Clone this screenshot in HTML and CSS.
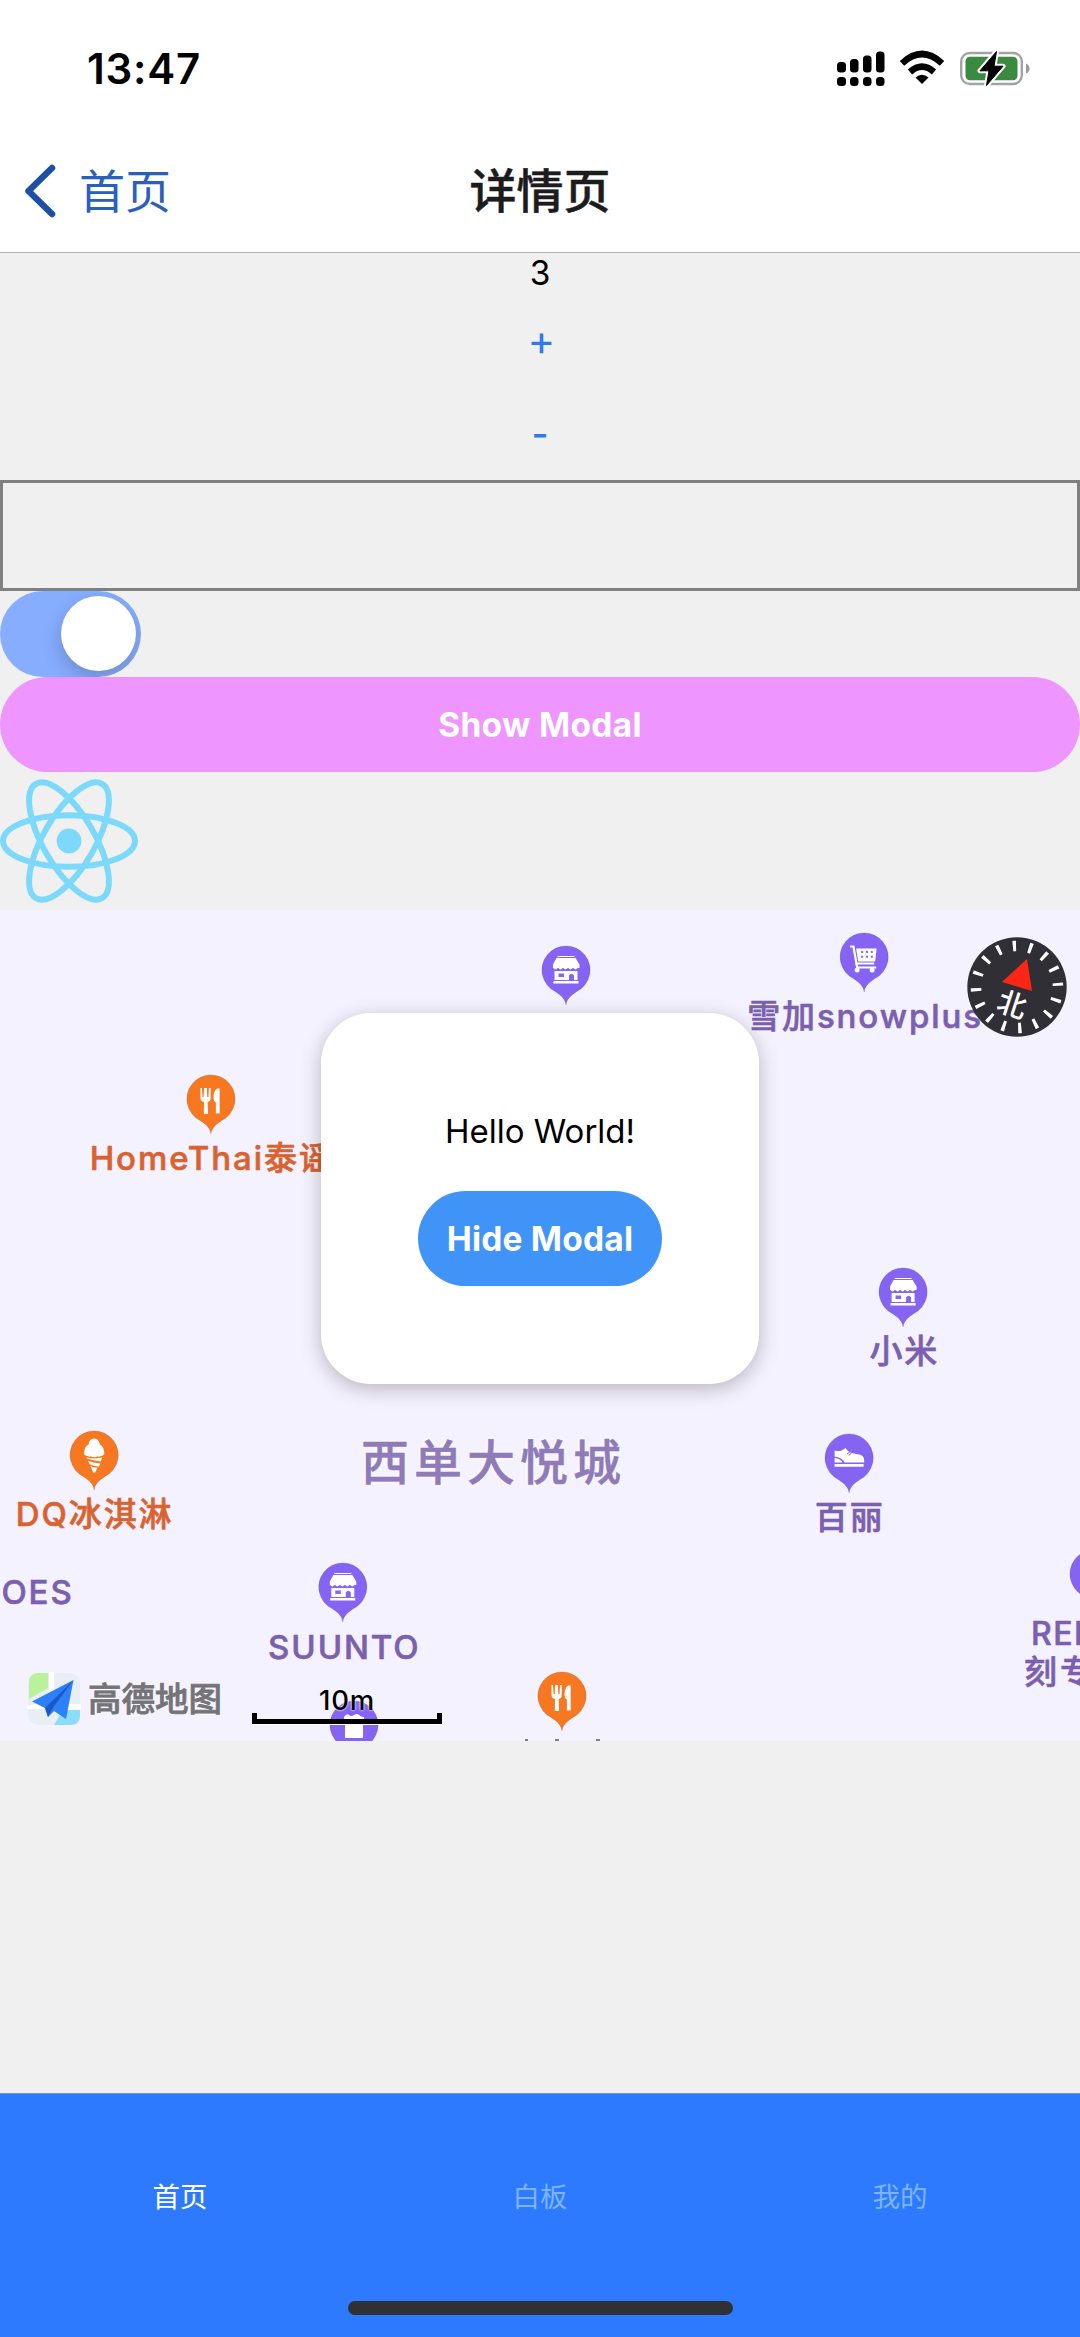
FILE: index.html
```html
<!DOCTYPE html>
<html lang="zh-CN">
<head>
<meta charset="utf-8">
<title>详情页</title>
<link rel="stylesheet" href="styles.css">
</head>
<body>
<svg class="defs" aria-hidden="true">
  <symbol id="pin" viewBox="0 0 50 60">
    <path d="M25 60C24.300 54.500 21.500 51.500 14.500 46.700A24.100 24.100 0 1 1 35.500 46.700C28.500 51.500 25.700 54.500 25 60Z" stroke="#000" stroke-opacity=".12" stroke-width="1"/>
  </symbol>
  <symbol id="shop" viewBox="0 0 50 60">
    <path fill="#fff" d="M16.500 11h17v1h-17zM15.500 13h19l4 6.500v3.500h-1.500c-1 0-1.500 1.500-2.500 1.500s-1.500-1.500-2.500-1.500-1.500 1.500-2.500 1.500-1.500-1.500-2.500-1.500-1.500 1.500-2.500 1.500-1.500-1.500-2.500-1.500-1.500 1.500-2.500 1.500-1.500-1.500-2.500-1.500-1.500 1.500-2.500 1.500-1.500-1.500-2.500-1.500v-3.500zM13.500 26h23v9h-3.500v-4.500q-2.500-3.500-5 0v4.500h-14.500zM17.500 28.500v3.500h5.500v-3.500zM12.500 36h25v2.500h-25z" fill-rule="evenodd"/>
  </symbol>
  <symbol id="food" viewBox="0 0 50 60">
    <path fill="#fff" d="M14.500 14h1.500l.5 9h1.200l.4-9h2.800l.4 9h1.200l.5-9h1.700v9.500q0 4-3 4.500l.3 12h-4.200l.3-12q-3.600-.5-3.600-4.500zM33.700 14.500v25h-3.800v-11q-2.400-1-2.400-4.500c0-4 .8-7.500 3.500-9.500z"/>
  </symbol>
  <symbol id="cart" viewBox="0 0 50 60">
    <path fill="none" stroke="#fff" stroke-width="2.200" d="M11 14.500h3.300l3.700 21h19M16 31.500h19"/>
    <path fill="#fff" d="M17 16.500h20.500l-1.500 13h-17z"/>
    <g stroke="#8564f4" stroke-width="2" stroke-dasharray="2 2.800"><path d="M22 20h13M22 24.800h13"/></g>
    <circle cx="18" cy="38" r="2.500" fill="#fff"/><circle cx="33" cy="38" r="2.500" fill="#fff"/>
  </symbol>
  <symbol id="shoe" viewBox="0 0 50 60">
    <path fill="#fff" d="M10.500 17.500q4 1 7 0l4-2.500c1.500 2 2.500 3.500 5 4.500 5 2 11 1 13 5q.7 1.500.5 5H20.500q-2.500-5-10-6zM10.500 25q6 .5 8 4.500h-8zM10.500 31h29v2.700h-29z"/>
    <path d="m23 21 3-2.500M24.500 22.500l3-2.500" stroke="#8564f4"/>
  </symbol>
  <symbol id="ice" viewBox="0 0 50 60">
    <path fill="#fff" d="M25 8.500c3.500 0 5.500 3 5.500 6q4 2 4 5.500 2.500 5.500-3 6-1.500 1.500-3 .2-3.500 2-7 0-1.500 1.300-3-.2-5.500-.5-3-6 0-3.500 4-5.500c0-3 2-6 5.500-6zM17 27.500q7 2 16 0l-1.400 4q-7-1-13.300-2.800zM18.700 30.800q5 2 12.400 2.700l-1.300 3.300q-5-.6-9.200-2.500zM21.300 36q3 1.500 7 1.800l-2.300 4.700h-2z"/>
  </symbol>
</svg>

<div class="screen">
  <header class="header">
    <div class="status">
      <time class="clock">13:47</time>
      <svg class="status-icons" width="194" height="38" viewBox="0 0 194 38">
        <g>
          <rect x="1" y="12" width="9" height="10.500" rx="3.500"/><rect x="14" y="9" width="8.500" height="13.500" rx="3.500"/><rect x="27" y="5.500" width="8.500" height="17" rx="3.500"/><rect x="40" y="1.500" width="8.500" height="21" rx="3.500"/>
          <rect x="1" y="27" width="9" height="9" rx="3.500"/><rect x="14" y="27" width="8.500" height="9" rx="3.500"/><rect x="27" y="27" width="8.500" height="9" rx="3.500"/><rect x="40" y="27" width="8.500" height="9" rx="3.500"/>
        </g>
        <g fill="none" stroke="#000" stroke-width="6.500">
          <path d="M66 13.300Q86 -5.300 106 13.300"/><path d="M74 22Q86 11.200 98 22"/>
        </g>
        <path d="M79.500 27.500q6.500-5.500 13 0l-6.500 6.500z"/>
        <rect x="125.200" y="3" width="60.600" height="31" rx="8.500" fill="none" stroke="#a3a3a5" stroke-width="2.400"/>
        <rect x="129.500" y="6.800" width="52" height="23.500" rx="4.500" fill="#3a8b40"/>
        <path d="M190 13.500q3.500 1.500 3.500 5t-3.500 5z" fill="#9a9a9c"/>
        <path d="M160.500 1.500 144 20.800h9L150.500 35.500 167 16.200h-9z" stroke="#fff" stroke-width="5" stroke-linejoin="round"/>
        <path d="M160.500 1.500 144 20.800h9L150.500 35.500 167 16.200h-9z" stroke="#000" stroke-linejoin="round"/>
      </svg>
    </div>
    <nav class="navbar">
      <a class="back">
        <svg width="32" height="54" viewBox="0 0 32 54"><path d="M28 4 4.500 27l23.500 23" fill="none" stroke="#1d4fa5" stroke-width="6.500" stroke-linecap="round" stroke-linejoin="round"/></svg>
        <span>首页</span>
      </a>
      <h1 class="title">详情页</h1>
    </nav>
  </header>

  <main class="content">
    <div class="count">3</div>
    <button class="step plus">+</button>
    <button class="step">-</button>
    <input class="field" type="text">
    <div class="switch"><span class="knob"></span></div>
    <button class="show-modal">Show Modal</button>
    <svg class="logo" width="138" height="138" viewBox="-69 -69 138 138">
      <circle r="12.400" fill="#7dd9fa"/>
      <g fill="none" stroke="#7dd9fa" stroke-width="6"><ellipse rx="66" ry="25.800"/><ellipse rx="66" ry="25.800" transform="rotate(60)"/><ellipse rx="66" ry="25.800" transform="rotate(120)"/></g>
    </svg>

    <section class="map">
      <div class="poi shop1"><svg class="pin"><use href="#pin"/><use href="#shop"/></svg></div>
      <div class="poi snow"><svg class="pin"><use href="#pin"/><use href="#cart"/></svg><span class="label">雪加snowplus</span></div>
      <div class="poi thai food"><svg class="pin"><use href="#pin"/><use href="#food"/></svg><span class="label">HomeThai泰谣</span></div>
      <div class="poi mi"><svg class="pin"><use href="#pin"/><use href="#shop"/></svg><span class="label">小米</span></div>
      <div class="poi belle"><svg class="pin"><use href="#pin"/><use href="#shoe"/></svg><span class="label">百丽</span></div>
      <div class="poi dq food"><svg class="pin"><use href="#pin"/><use href="#ice"/></svg><span class="label">DQ冰淇淋</span></div>
      <div class="poi suunto"><svg class="pin"><use href="#pin"/><use href="#shop"/></svg><span class="label">SUUNTO</span></div>
      <div class="poi rei"><svg class="pin"><use href="#pin"/></svg><span class="label latin">REI</span><span class="label">刻专</span></div>
      <div class="poi oes"><span class="label">OES</span></div>
      <div class="poi shop2"><svg class="pin"><use href="#pin"/><path fill="#fff" d="M15 17q3-4 5-2t5 0 5 0 5 2v3H15zM16 24h18v14H16z"/></svg></div>
      <div class="poi diner food"><svg class="pin"><use href="#pin"/><use href="#food"/></svg></div>
      <svg class="sliver" width="80" height="2" viewBox="0 0 80 2"><path d="M1 1h3M31 1h4M72 1h4" stroke="#8c7b78" stroke-width="2"/></svg>
      <div class="mall">西单大悦城</div>

      <svg class="compass" width="100" height="100" viewBox="-50 -50 100 100">
        <circle r="49.700" fill="#302f36"/>
        <circle r="41" fill="none" stroke="#fff" stroke-width="10.500" stroke-dasharray="3.300 12.801" stroke-dashoffset="1.650" transform="rotate(-4)"/>
        <path d="M10-28-15-5 15 4z" fill="#fb2716"/>
        <text transform="translate(-5 18) rotate(18)" x="0" y="10" text-anchor="middle">北</text>
      </svg>

      <div class="amap">
        <svg width="54" height="54" viewBox="0 0 54 54">
          <rect x="1" y="1" width="52" height="52" rx="10" fill="#e9eef5"/>
          <path d="M11 1h10v15L2 27V11Q2 1 11 1z" fill="#baf29b"/><path d="M53 38v6q0 9-10 9H27l9-15z" fill="#8cdcfb"/>
          <path d="M22 0h5v19h-5zM0 34l22-5v8H0zM37 32h17v6H37z" fill="#fff"/>
          <path d="M46.500 8 5 29.500 18 36l3 9 6-6 12 8z" fill="#2c80f8"/><path d="M46.500 8 18 36l3 9 5.500-10z" fill="#1c58c8"/>
        </svg>
        <span>高德地图</span>
      </div>
      <div class="scale"><span>10m</span><i></i></div>
    </section>
  </main>

  <nav class="tabs">
    <a class="tab active">首页</a><a class="tab">白板</a><a class="tab">我的</a>
    <span class="home-indicator"></span>
  </nav>

  <div class="modal">
    <p>Hello World!</p>
    <button>Hide Modal</button>
  </div>
</div>
</body>
</html>
```
FILE: styles.css
```css
* { box-sizing: border-box; }
body { margin: 0; font-family: Inter, "Noto Sans CJK SC", sans-serif; background: #f0f0f0; }
button, input { font: inherit; border: 0; padding: 0; margin: 0; background: none; }
.defs { display: none; }
.screen { position: relative; width: 1080px; height: 2337px; display: flex; flex-direction: column; overflow: hidden; }

.header { height: 253px; background: #fff; border-bottom: 1px solid #b2b2b4; }
.status { height: 132px; display: flex; justify-content: space-between; align-items: flex-start; padding: 43px 50px 0 87px; }
.clock { font-size: 42px; line-height: 52px; font-weight: 600; letter-spacing: .8px; }
.status-icons { margin-top: 7px; }
.navbar { height: 118px; display: grid; grid-template-columns: 1fr auto 1fr; align-items: center; }
.back { display: flex; align-items: center; gap: 23px; padding-left: 24px; font-size: 46px; color: #2a60bd; line-height: 60px; }
.title { margin: 0; font-size: 47px; line-height: 60px; font-weight: 500; color: #1c1c1e; -webkit-text-stroke: .5px currentColor; }

.content { flex: 1; display: flex; flex-direction: column; align-items: flex-start; }
.count { width: 100%; height: 41px; line-height: 40px; font-size: 33.500px; text-align: center; }
.step { width: 100%; height: 93px; font-size: 37px; font-weight: 500; color: #2f7bee; }
.plus { font-size: 42px; font-weight: 400; padding: 0 0 3px 3px; }
.field { width: 100%; height: 111px; border: 3px solid #808080; }
.switch { width: 141px; height: 86px; padding: 5px; border-radius: 43px; background: #86adff; display: flex; justify-content: flex-end; overflow: hidden; }
.knob { width: 75px; height: 75px; border-radius: 50%; background: #fff; box-shadow: 0 8px 20px rgba(0, 0, 0, .2); }
.show-modal { width: 100%; height: 95px; border-radius: 48px; background: #ee95ff; color: #fff; font-size: 33.500px; font-weight: 650; letter-spacing: .3px; }
.logo { display: block; }

.map { position: relative; width: 100%; height: 831px; background: #f5f2ff; overflow: hidden; }
.poi { position: absolute; transform: translateX(-50%); display: flex; flex-direction: column; align-items: center; color: #7a60ae; }
.pin { width: 50px; height: 60px; fill: #8564f4; }
.food { color: #d9622f; }
.food .pin { fill: #f87821; }
.label { margin-top: 6px; font-size: 33px; line-height: 36px; font-weight: 500; letter-spacing: 1.900px; margin-right: -2px; white-space: nowrap; -webkit-text-stroke: .6px currentColor; }
.shop1 { left: 565.500px; top: 35px; }
.snow { left: 864px; top: 22px; }
.thai { left: 210.700px; top: 164px; }
.mi { left: 903.300px; top: 357px; }
.belle { left: 848.700px; top: 523px; }
.dq { left: 93.700px; top: 520px; }
.suunto { left: 343.300px; top: 652px; }
.suunto .label { margin-top: 7px; }
.rei { left: 1024px; top: 639px; transform: none; align-items: flex-start; }
.rei .pin { margin-left: 45px; }
.rei .label { margin-top: 2px; line-height: 37px; letter-spacing: 3px; }
.rei .latin { margin: 6px 0 0 7px; font-size: 32px; letter-spacing: 1.500px; }
.oes { left: 36.500px; top: 658px; }
.shop2 { left: 354.300px; top: 790px; }
.diner { left: 562.300px; top: 761px; }
.sliver { position: absolute; left: 524px; top: 829px; }
.mall { position: absolute; left: 361px; top: 520px; font-size: 48px; line-height: 66px; font-weight: 500; letter-spacing: 5px; color: #8f7bb8; text-shadow: 0 0 4px #fff; white-space: nowrap; -webkit-text-stroke: .5px currentColor; }
.compass { position: absolute; left: 967px; top: 27px; }
.compass text { font-size: 29px; font-weight: 500; fill: #fff; }
.amap { position: absolute; left: 27px; top: 762px; display: flex; align-items: center; gap: 7px; font-size: 33.500px; line-height: 40px; font-weight: 500; color: #737378; text-shadow: 0 0 3px #fff; -webkit-text-stroke: .8px currentColor; }
.scale { position: absolute; left: 252px; top: 773px; width: 190px; display: flex; flex-direction: column; align-items: center; font-size: 27.500px; line-height: 34px; font-weight: 500; text-shadow: 0 0 2px #fff, 0 0 2px #fff; }
.scale span { margin-right: 12px; letter-spacing: .8px; }
.scale span { margin-right: 0; }
.scale i { width: 190px; height: 11px; margin-top: -4px; border: 5px solid #000; border-top: 0; box-shadow: 0 1px 0 #fff; }

.tabs { height: 244px; background: #2e7aff; border-top: 1px solid #6d96cc; display: grid; grid-template-columns: repeat(3, 1fr); grid-template-rows: 206px 15px; align-items: center; justify-items: center; }
.tab { font-size: 27.500px; line-height: 36px; color: #7cb5ff; }
.tab.active { color: #fff; }
.home-indicator { grid-column: 1 / -1; width: 385px; height: 14px; border-radius: 7px; background: #303135; }

.modal { position: absolute; left: 321px; top: 1013px; width: 438px; height: 371px; padding-top: 98px; border-radius: 50px; background: #fff; box-shadow: 0 5px 20px rgba(0, 0, 0, .25); display: flex; flex-direction: column; align-items: center; }
.modal p { margin: 0 0 40px; font-size: 33px; line-height: 40px; }
.modal button { width: 244px; height: 95px; border-radius: 48px; background: #4194f7; color: #fff; font-size: 33.500px; font-weight: 650; letter-spacing: .2px; }
```
